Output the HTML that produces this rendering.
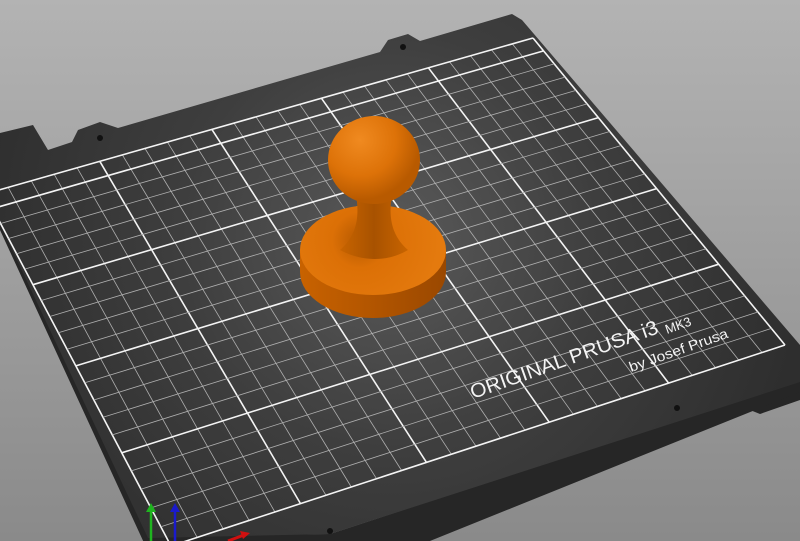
<!DOCTYPE html>
<html><head><meta charset="utf-8">
<style>
html,body{margin:0;padding:0;width:800px;height:541px;overflow:hidden;background:#9c9c9c}
svg{display:block}
</style></head>
<body>
<svg id="s" width="800" height="541" viewBox="0 0 800 541" xmlns="http://www.w3.org/2000/svg">
<defs>
<linearGradient id="bg" x1="0" y1="0" x2="0" y2="1">
<stop offset="0" stop-color="#b3b3b3"/><stop offset="1" stop-color="#8a8a8a"/>
</linearGradient>
<radialGradient id="pl" cx="390" cy="240" r="420" gradientUnits="userSpaceOnUse">
<stop offset="0" stop-color="#5a5a5a"/><stop offset="0.5" stop-color="#3e3e3e"/><stop offset="1" stop-color="#2e2e2e"/>
</radialGradient>
<radialGradient id="ball" cx="360" cy="140" r="60" gradientUnits="userSpaceOnUse">
<stop offset="0" stop-color="#f08a20"/><stop offset="0.6" stop-color="#dd7208"/><stop offset="1" stop-color="#b85a00"/>
</radialGradient>
<radialGradient id="disk" cx="360" cy="240" r="80" gradientUnits="userSpaceOnUse">
<stop offset="0" stop-color="#b45800"/><stop offset="0.35" stop-color="#dc7006"/><stop offset="1" stop-color="#e47a0e"/>
</radialGradient>
<linearGradient id="side" x1="0" y1="0" x2="1" y2="0">
<stop offset="0" stop-color="#c86200"/><stop offset="0.5" stop-color="#b25500"/><stop offset="1" stop-color="#9a4800"/>
</linearGradient>
<linearGradient id="neck" x1="0" y1="0" x2="1" y2="0">
<stop offset="0" stop-color="#c86400"/><stop offset="0.5" stop-color="#a85200"/><stop offset="1" stop-color="#c86400"/>
</linearGradient>
</defs>
<rect width="800" height="541" fill="url(#bg)"/>
<polygon points="730,402 760,414 800,400 800,388 740,398" fill="#262626"/>
<polygon points="0,230 145,545 420,545 800,392 800,380 330,534 150,536 0,222" fill="#262626"/>
<polygon points="0,133 33,125 48,150 72,142 78,130 100,122 118,128 380,52 388,40 408,34 420,41 512,14 522,20 800,345 800,382 330,534 148,538 0,224" fill="url(#pl)"/>
<g id="grid"></g>
<circle cx="403" cy="47" r="3" fill="#111"/>
<circle cx="100" cy="138" r="3" fill="#111"/>
<circle cx="677" cy="408" r="3" fill="#111"/>
<circle cx="330" cy="531" r="3" fill="#111"/>
<g fill="#f4f4f4" font-family="Liberation Sans, sans-serif">
<text x="0" y="0" font-size="20" transform="translate(473,399) rotate(-19.5)" textLength="198" lengthAdjust="spacingAndGlyphs">ORIGINAL PRUSA i3</text>
<text x="0" y="0" font-size="13" transform="translate(667,334) rotate(-19.5)">MK3</text>
<text x="0" y="0" font-size="14" transform="translate(631,372) rotate(-19.5)" textLength="104" lengthAdjust="spacingAndGlyphs">by Josef Prusa</text>
</g>
<ellipse cx="373" cy="272" rx="73" ry="46" fill="url(#side)"/>
<rect x="300" y="250" width="146" height="22" fill="url(#side)"/>
<ellipse cx="373" cy="250" rx="73" ry="45" fill="url(#disk)"/>
<path d="M356,195 C360,218 356,236 340,250 C362,262 388,262 408,250 C392,236 388,218 392,195 Z" fill="url(#neck)"/>
<ellipse cx="374" cy="160" rx="46" ry="44" fill="url(#ball)"/>
<line x1="151" y1="541" x2="151" y2="510" stroke="#1fb51f" stroke-width="2.5"/>
<polygon points="146,512 151,503 156,512" fill="#1fb51f"/>
<line x1="175" y1="541" x2="175" y2="510" stroke="#1a1acc" stroke-width="2.5"/>
<polygon points="170,512 175,503 180,512" fill="#1a1acc"/>
<line x1="228" y1="541" x2="244" y2="535" stroke="#d01010" stroke-width="3"/>
<polygon points="240,531 250,533 243,539" fill="#d01010"/>
</svg>
<script>
(function(){
// homography unit square -> quad (p0=(0,0) BL, p1=(1,0) BR, p2=(1,1) TR, p3=(0,1) TL)
var x0=171,y0=546,x1=785,y1=345,x2=533,y2=38,x3=-15,y3=194;
var dx1=x1-x2,dx2=x3-x2,dy1=y1-y2,dy2=y3-y2,sx=x0-x1+x2-x3,sy=y0-y1+y2-y3;
var det=dx1*dy2-dx2*dy1;
var g_=(sx*dy2-dx2*sy)/det,h_=(dx1*sy-sx*dy1)/det;
var a=x1-x0+g_*x1,b=x3-x0+h_*x3,c=x0,d=y1-y0+g_*y1,e=y3-y0+h_*y3,f=y0;
function P(u,v){var w=g_*u+h_*v+1;return[(a*u+b*v+c)/w,(d*u+e*v+f)/w];}
var h='';
function ln(p,q,maj){
 h+='<line x1="'+p[0].toFixed(1)+'" y1="'+p[1].toFixed(1)+'" x2="'+q[0].toFixed(1)+'" y2="'+q[1].toFixed(1)+'" stroke="'+(maj?'#f4f4f4':'#b0b0b0')+'" stroke-width="'+(maj?1.6:0.8)+'"/>';
}
for(var x=0;x<=250;x+=10){var u=x/250;ln(P(u,0),P(u,1),x%50==0);}
for(var y=0;y<=210;y+=10){var v=y/210;ln(P(0,v),P(1,v),y%50==0||y==210||y==200);}
document.getElementById('grid').innerHTML=h;
})();
</script>
</body></html>
